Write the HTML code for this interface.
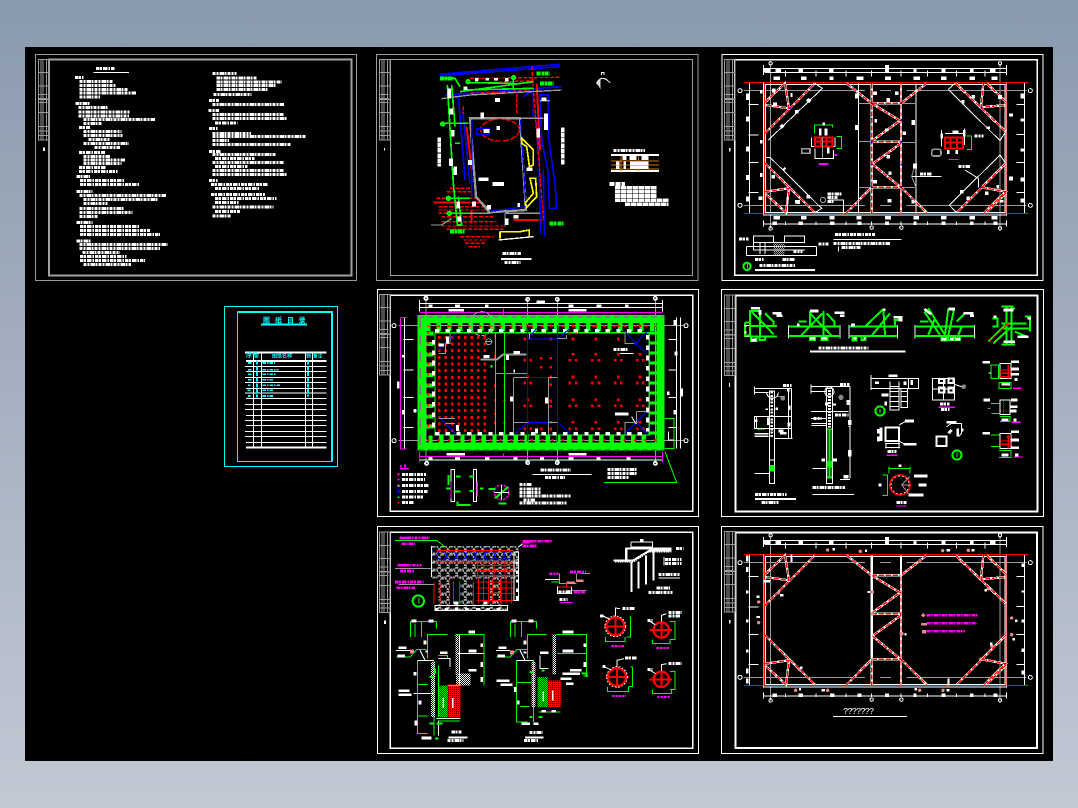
<!DOCTYPE html>
<html lang="zh"><head><meta charset="utf-8"><title>CAD</title>
<style>
html,body{margin:0;padding:0;width:1078px;height:808px;overflow:hidden;background:linear-gradient(#8a9aae,#c2c8d4)}
svg{position:absolute;left:0;top:0;display:block}
path,line,rect,circle,ellipse,polyline,polygon{fill:none}
.w{stroke:#fff;stroke-width:3}.w2{stroke:#fff;stroke-width:6}.f{fill:#fff;stroke:none}
.a{stroke:#9a9a9a;stroke-width:3}.a2{stroke:#a0a0a0;stroke-width:6}
.n{stroke:#0f0;stroke-width:3}.n2{stroke:#0f0;stroke-width:6}
.r{stroke:#f00;stroke-width:3}.r2{stroke:#f00;stroke-width:6}
.b{stroke:#00f;stroke-width:3}.b2{stroke:#00f;stroke-width:5}
.m{stroke:#f0f;stroke-width:3}.c{stroke:#0ff;stroke-width:3}
.y{stroke:#ff0;stroke-width:5}.o{stroke:#c87010;stroke-width:3}
.T{stroke:#fff;stroke-width:9;stroke-dasharray:10 2 6 3 14 2 5 3}
.Tm{stroke:#f0f;stroke-width:8;stroke-dasharray:10 2 6 3 14 2 5 3}
.Tn{stroke:#0f0;stroke-width:12;stroke-dasharray:12 2 8 2}
.Tc{stroke:#0ff;stroke-width:5;stroke-dasharray:10 3 5 3}
.d{stroke:#fff;stroke-width:11}
.s1{stroke:#fff;stroke-width:7}.s2{stroke:#f00;stroke-width:4;stroke-dasharray:16 5}
text{font-family:"Liberation Sans","Noto Sans CJK SC",sans-serif}
</style></head><body>
<svg width="1078" height="808" viewBox="0 0 1078 808" xmlns="http://www.w3.org/2000/svg" shape-rendering="crispEdges">
<defs>
<pattern id="ph" width="6" height="6" patternUnits="userSpaceOnUse"><path d="M0 0h3v3h-3zM3 3h3v3h-3z" style="fill:#0f0"/></pattern>
<pattern id="pr" width="6" height="6" patternUnits="userSpaceOnUse"><path d="M0 0h3v3h-3zM3 3h3v3h-3zM3 0h3v3h-3z" style="fill:#f00"/></pattern>
<pattern id="pw" width="6" height="6" patternUnits="userSpaceOnUse"><path d="M0 0h3v3h-3zM3 3h3v3h-3z" style="fill:#fff"/></pattern>
<pattern id="pa" width="6" height="6" patternUnits="userSpaceOnUse"><path d="M0 0h3v3h-3zM3 3h3v3h-3z" style="fill:#aaa"/></pattern>
<pattern id="pm" width="26" height="24" patternUnits="userSpaceOnUse"><rect x="2" y="2" width="22" height="20" rx="7" style="fill:none;stroke:#aaa;stroke-width:5;stroke-dasharray:6 2"/></pattern>
<g id="strip"><rect class="a" x="0" y="0" width="32" height="242"/><path class="a" d="M8 0V242M14 0V242M24 0V242M0 40H32M0 80H32M0 120H32M0 160H32M0 202H32M0 215H32M0 228H32M2 105H28M2 118H28M2 130H28"/></g>
<g id="struts">
<path id="sp" d="M150 157L210 100L222 175L150 165M150 250L300 100M150 340L300 488M150 425L222 415L213 488L150 430M722 100L872 245M805 100L798 172L872 165M815 100L872 155M872 340L725 488M800 412L872 425L807 488M872 430L815 488M470 100V490M558 100V490M470 160H558M470 275H558M470 412H558M470 160L555 212L472 272M558 280L472 342L555 410M395 100L470 160M558 160L635 100M395 488L470 412M558 412L635 488"/>
</g>
<g id="base">
<path class="a" d="M85 122H450M495 122H528M575 122H935M85 466H450M495 466H528M575 466H935M167 40V535M855 40V535"/>
<path class="w" d="M145 55H875M150 68H875M145 522H875M103 97V490M928 97V490M145 45V75M875 45V75M145 512V530M875 512V530"/>
<path class="w" d="M100 163H130M100 255H130M100 338H130M100 428H130M905 163H930M905 253H930M905 338H930M905 428H930M212 62V80M303 62V80M393 62V80M470 62V80M558 62V80M638 62V80M725 62V80M810 62V80M212 515V525M303 515V525M393 515V525M470 515V525M558 515V525M638 515V525M725 515V525M810 515V525"/>
<path class="r" d="M85 97H940M85 491H940"/>
<path class="w" d="M145 97V495H875V97H145ZM151 103H870V488H151Z"/>
<path class="r" d="M145 97H875M148 97V491M873 97V491M145 491H875"/>
<use href="#sp" class="s1"/><use href="#sp" class="s2"/>
<path class="d" d="M145 62H165M182 62H198M250 62H264M342 62H355M510 50H522M510 62H522M595 62H605M680 62H692M765 62H775M825 62H842M172 520H186M250 520H264M345 520H358M428 520H440M510 520H522M595 520H605M680 520H692M765 520H775M835 520H848"/>
<circle class="w" cx="167" cy="40" r="5"/><circle class="w" cx="855" cy="40" r="5"/><circle class="w" cx="167" cy="535" r="5"/><circle class="w" cx="855" cy="535" r="5"/><circle class="w" cx="470" cy="533" r="5"/><circle class="w" cx="559" cy="533" r="5"/>
<circle class="w" cx="75" cy="122" r="6"/><circle class="w" cx="75" cy="466" r="6"/><circle class="w" cx="946" cy="122" r="6"/><circle class="w" cx="946" cy="466" r="6"/>
</g>
</defs>
<rect x="25" y="47" width="1028" height="714" style="fill:#000"/>

<!-- Sheet 1 -->
<g transform="translate(25,45) scale(.33333)">
<rect class="a" x="31" y="28" width="964" height="678"/>
<rect class="a2" x="72" y="44" width="907" height="647"/>
<use href="#strip" transform="translate(40,43)"/>
<path class="f" d="M54 308h6v10h-6z"/>
<path class="T" d="M213 71H270M150 97H175M163 110H263M163 121H275M163 133H308M163 144H333M163 156H225M152 176H195M160 188H248M160 201H315M160 213H312M175 224H392M175 235H233M162 248H195M175 260H290M175 271H293M190 284H255M175 296H312M208 308H285M162 323H240M175 335H255M175 345H300M175 355H290M162 368H243M162 380H278M155 395H195M165 407H300M165 419H342M155 439H203M163 451H425M175 464H398M175 476H248M163 490H297M163 503H323M163 514H218M155 533H203M165 544H345M165 556H375M165 568H405M155 588H197M163 598H428M163 610H405M172 622H285M165 634H305M165 646H360M175 658H318"/>
<path class="T" d="M562 86H635M575 99H695M575 111H770M575 122H755M575 133H727M565 149H680M552 166H582M562 178H778M550 197H582M562 209H775M562 221H788M570 234H638M552 251H578M562 265H678M562 275H845M562 286H612M562 298H797M552 319H590M562 328H752M570 341H688M562 352H776M570 364H668M562 376H776M562 388H788M552 407H578M558 418H728M570 431H705M558 448H720M570 461H755M570 473H640M562 486H745M570 499H645M562 513H620"/>
<path class="w" d="M205 82H312"/>
</g>

<!-- Table -->
<g transform="translate(220,300) scale(.33333)">
<rect class="c" x="13" y="19" width="339" height="480"/>
<path class="c" style="stroke-width:6" d="M52 36H336V484"/><rect class="c" x="52" y="36" width="284" height="448"/>
<text x="129 165 201 236" y="68" style="fill:#0ff;font-size:21px;font-weight:bold">图纸目录</text>
<path class="c" style="stroke-width:6" d="M123 74H261"/>
<path class="w" d="M75 199H320M78 214H320M75 232H320M75 247H320M78 265H320M75 279H320M78 295H320M75 313H320M75 328H320M78 346H320M75 361H320M78 376H320M75 394H320M75 409H320M78 427H320M100 158V443M124 158V443M256 158V443M277 158V443"/>
<path class="w2" d="M75 158H320M78 183H320M78 443H320"/>
<text x="78 96" y="172" style="fill:#0ff;font-size:18px;font-weight:bold">序号</text>
<text x="104" y="172" style="fill:#0ff;font-size:14px;font-weight:bold">号</text>
<text x="156" y="172" style="fill:#0ff;font-size:15px;font-weight:bold">图纸名称</text>
<text x="258" y="172" style="fill:#0ff;font-size:16px;font-weight:bold">张</text>
<text x="279" y="172" style="fill:#0ff;font-size:14px;font-weight:bold">备注</text>
<path class="Tc" d="M84 189H94M128 189H165M84 209H94M128 209H175M84 223H94M128 223H168M84 239H94M128 239H162M84 256H92M128 256H180M82 271H92M128 271H160M84 288H92M128 288H162"/>
<path class="c" style="stroke-width:7;stroke-dasharray:12 5" d="M111 182V292M264 182V290"/>
</g>

<!-- Sheet 2 -->
<g transform="translate(370,50) scale(.33333)">
<rect class="a" x="19" y="14" width="965" height="677"/>
<rect class="a" x="62" y="28" width="906" height="648"/>
<use href="#strip" transform="translate(28,28)"/>
<path class="f" d="M42 294h3v8h-3z"/>
<!-- blue -->
<path class="b2" d="M207 73L570 43M210 77L570 50M225 135L575 110M510 135H535V260L555 400L560 475H538L535 370L515 270ZM505 240L512 550M520 360L523 560M265 135L285 390M278 180L300 400M490 115V200M495 180L505 300M460 140L490 120"/>
<path class="c" d="M345 205L445 205"/>
<!-- red -->
<path class="r2" style="stroke-dasharray:12 4;stroke-width:4" d="M300 85L572 82M290 100L490 92M300 130L480 122M485 50L520 505M440 130V190M190 458H340M200 445H320M230 425H310M240 415H300M205 470H345M205 480H345M205 490H360M215 500H370M215 515H380M215 528H400M230 538H400M270 560H370M280 570H350M285 580H345M295 590H330M430 510H520M280 170V190"/>
<path class="r2" d="M190 458H300M305 480V520M500 100L510 300M290 230L305 360M430 510H505"/>
<!-- green -->
<path class="n2" style="stroke-width:5" d="M232 105L250 400L262 525H275L265 440M245 105L255 230M215 220H295M270 125L490 95M280 120L490 115M210 85H255L270 110M300 98L435 100M430 85V120M230 445H300M240 490H300M255 280H270"/>
<path class="Tn" d="M500 70H540M210 85H250M510 100H550M538 520H580M240 545H283"/>
<circle class="n2" cx="294" cy="95" r="5"/><circle class="n2" cx="431" cy="83" r="5"/><circle class="n2" cx="218" cy="222" r="5"/><circle class="n2" cx="235" cy="445" r="5"/><circle class="n2" cx="238" cy="490" r="5"/>
<!-- gray bldg -->
<path class="a" style="stroke-width:7" d="M300 205L450 205L468 480L358 487L318 440Z"/>
<path class="a" style="stroke-width:4" d="M215 146L300 135M300 135L575 120M315 440L360 480M183 525H215L245 505M300 490H358M405 490H510M405 490V530M510 152H540M450 205H520"/>
<path class="b2" style="stroke-width:4" d="M305 210V440M452 210L468 470L360 484"/>
<ellipse class="r" cx="390" cy="240" rx="58" ry="33" style="stroke-dasharray:18 5;stroke-width:4"/>
<path class="b" style="stroke-width:5" d="M320 237H357V253H320Z"/>
<path class="y" d="M455 265L490 300V345L478 350L475 325L470 290L455 280ZM480 385H497L500 440L470 472L465 460L490 430ZM390 545H450L478 540V562M390 545V565"/>
<path class="w2" style="stroke-width:4" d="M385 570L490 560"/>
<!-- white blobs -->
<path class="d" d="M320 84V94M352 84V92M378 84V92M410 84V94M238 115V145M243 175V193M248 240V260M243 325V348M256 350V375M340 243H358M375 150H390M380 234H390M505 235V262M528 190V240M410 505V525M430 500H445M300 330V345M312 455V470M265 455V475M268 500V515M325 388H355M367 402H402M442 465H450M470 358H487M515 148H530M337 188V205M357 465V478M280 115H293"/>
<path class="w2" style="stroke-width:11;stroke-dasharray:14 2" d="M208 262V350M578 232V345"/>
<!-- north -->
<path class="w" d="M680 98Q696 72 720 98"/>
<path d="M678 100Q684 90 692 86V120Q688 108 678 100Z" style="fill:#ddd"/>
<path class="w" d="M695 75V68H702V75"/>
<!-- table -->
<path class="T" d="M730 301H825"/>
<path class="w2" d="M723 315H867M723 363H867"/>
<path class="o" d="M723 333H867M723 345H867M723 357H867M753 318V363M805 318V363"/>
<path class="d" d="M758 324H770M778 324H800M815 324H835M738 340H748M760 340H768M780 340H835M738 352H748M760 352H768M780 352H835"/>
<path class="T" style="stroke-width:11;stroke-dasharray:16 2" d="M718 402H765M735 413H860M735 425H860M735 438H860M735 451H895M765 463H895"/>
<path class="T" d="M398 610H455M403 637H452"/><path class="w2" d="M393 627H485"/>
</g>

<!-- Sheet 3 -->
<g transform="translate(715,50) scale(.33333)">
<rect class="w" x="21" y="14" width="963" height="677"/>
<rect class="w" style="stroke-width:5" x="59" y="29" width="908" height="647"/>
<use href="#strip" transform="translate(28,28)"/>
<path class="f" d="M42 294h4v10h-4z"/>
<use href="#base"/>
<path class="d" d="M175 85H195M258 85H275M343 85H355M425 85H445M510 85H528M595 85H615M678 85H695M763 85H780M830 85H848M175 503H195M258 503H275M343 503H358M425 503H440M510 503H528M595 503H612M678 503H695M763 503H780M830 503H848"/>
<path class="w" d="M300 100L322 115L160 270M150 322L165 322L320 475L300 488M700 118L720 100M700 118L855 272L872 245M703 465L855 315L872 340M703 465L725 488M430 100V490M603 100V490M218 490V430M385 450V490"/>
<path class="a" d="M430 160H470M430 275H470M430 412H470M558 160H600M558 278H600M558 412H600M590 380L600 345M590 380L603 412"/>
<path class="w" d="M590 380H680M750 360L790 385V412"/>
<path class="d" d="M98 130V150M98 200V215M98 290V305M98 375V390M98 440V455M135 125H142M135 275H142M135 375H142M130 445H142M888 190V200M888 380V392M922 130V145M922 205V215M922 295V305M922 382V395M922 445V458M176 115V128M226 135H232M276 148L286 155M180 158V170M245 180V190M197 225L205 232M205 355L210 360M175 375V385M245 450V460M280 435V445M250 450V462M426 225V240M426 130V145M480 125V135M545 125V135M515 150H525M478 212H486M515 235V245M515 320H525M480 390V400M518 452H530M590 455H598M600 340V355M595 210V225M568 245V255M520 370H530M740 155H748M820 230V237M775 135V145M855 135V147M810 430H820M845 410H852M735 425H745M760 440V450M860 450V458"/>
<path class="b2" d="M468 160h5M556 160h5M468 206h5M556 210h5M468 276h5M556 276h5M468 344h5M556 344h5M468 411h5M556 411h5M222 175h5M222 413h5M796 172h5M796 412h5"/>
<!-- details -->
<path class="n" d="M298 250V225H352V232M365 260H380V295H365"/>
<path class="w" d="M290 262V290H360V262M300 295V325H355V300"/>
<path class="d" style="stroke-width:8" d="M316 235V256M333 235V256M340 290V310M322 222H330"/>
<path class="r2" d="M300 262H352V290H300ZM300 275H352M318 260V290M334 260V290"/>
<path class="m" style="stroke-width:6" d="M310 342H340M358 315H366"/>
<rect class="a" style="stroke-width:5" x="260" y="296" width="25" height="14"/>
<path class="a" d="M322 262V325"/>
<path class="w" d="M680 240V290M748 235V285M690 250H745"/>
<path class="d" style="stroke-width:8" d="M680 250V265M748 240V260M700 300V312M725 300V312M712 246H730"/>
<path class="r2" d="M690 262H744V296H690ZM690 278H744M706 262V296M726 262V296"/>
<path class="n" d="M755 258H770V298H755"/><path class="m" d="M700 328H730"/>
<rect class="a" style="stroke-width:5" x="650" y="298" width="28" height="20" rx="6"/>
<circle class="a" cx="324" cy="450" r="8"/>
<path class="T" d="M338 432H380M338 443H368M338 455H358M730 350H765M778 258H805M615 372H650"/>
<path class="w" d="M340 450H385V490"/>
<!-- bottom detail -->
<path class="T" d="M360 553H480M355 580H525M380 592H438"/><path class="w" d="M355 568H560M370 590V605"/>
<path class="w" d="M115 578V558H175V578M208 578V558H268V578M115 578H270M95 590H305M95 617H305V590M95 590V617M115 578V600H270M135 578V612M150 578V612"/>
<rect x="175" y="580" width="33" height="35" style="fill:url(#pa)"/>
<path class="T" d="M72 567H100M235 605H262M120 629H145M203 629H238M310 582H340"/>
<circle class="n2" cx="96" cy="649" r="11"/><path class="n" d="M97 642V656"/>
<path class="T" d="M133 646H240"/><path class="w2" d="M120 660H300"/>
</g>

<!-- Sheet 4 -->
<g transform="translate(370,285) scale(.33333)">
<rect class="w" x="23" y="14" width="962" height="680"/>
<rect class="w" style="stroke-width:5" x="61" y="31" width="907" height="648"/>
<use href="#strip" transform="translate(28,28)"/>
<path class="a" d="M85 122H945M85 467H945M168 40V535M473 40V535M562 40V535M856 40V535"/>
<path class="w" d="M148 55H878M148 68H878M148 45V80M878 45V80M148 525H878M148 512V530M878 512V530M103 97V490M920 97V490M932 97V490M100 163H130M100 255H130M100 338H130M100 428H130M895 163H920M895 255H920M895 338H920M895 428H920"/>
<path class="m" d="M148 83H878M92 97V492M148 515H878M148 500V528M878 500V528M92 97H110M92 492H110M400 70V95M400 505V515"/>
<path class="d" style="stroke-width:8" d="M175 62H188M255 62H270M345 62H355M500 50H525M595 62H610M680 62H695M765 62H775M235 76H282M595 76H650M230 508H285M595 508H650M175 520H188M255 520H270M345 520H358M430 520H442M510 520H522M595 520H610M680 520H692M770 520H782M100 210V218M100 375V388M85 290V310M135 372V382M915 105V122M918 200V212M915 375V388M935 310V335M895 320V330"/>
<circle class="w" style="stroke-width:5" cx="168" cy="40" r="5"/><circle class="w" style="stroke-width:5" cx="473" cy="43" r="5"/><circle class="w" style="stroke-width:5" cx="562" cy="43" r="5"/><circle class="w" style="stroke-width:5" cx="856" cy="40" r="5"/><circle class="w" style="stroke-width:5" cx="170" cy="535" r="5"/><circle class="w" style="stroke-width:5" cx="473" cy="533" r="5"/><circle class="w" style="stroke-width:5" cx="562" cy="533" r="5"/><circle class="w" style="stroke-width:5" cx="856" cy="535" r="5"/>
<circle class="w" cx="72" cy="122" r="6"/><circle class="w" cx="72" cy="467" r="6"/><circle class="w" cx="948" cy="122" r="6"/><circle class="w" cx="948" cy="467" r="6"/>
<!-- green band -->
<rect x="155" y="102" width="717" height="382" style="stroke:#0f0;stroke-width:24"/>
<path style="stroke:#0f0;stroke-width:24;stroke-dasharray:13 19" d="M168 126H860"/>
<path style="stroke:#0f0;stroke-width:22;stroke-dasharray:13 19" d="M175 462H832"/>
<path style="stroke:#0f0;stroke-width:24;stroke-dasharray:12 19" d="M178 140V450"/>
<path style="stroke:#0f0;stroke-width:4" d="M195 143H838V450H195Z"/>
<path style="stroke:#0f0;stroke-width:24;stroke-dasharray:8 22" d="M850 140V450"/>
<path style="stroke:#f0f;stroke-width:3;stroke-dasharray:16 12" d="M145 96H880M145 493H880"/>
<path class="m" style="stroke-width:4;stroke-dasharray:30 20" d="M150 100V490"/>
<path class="d" style="stroke-width:10;stroke-dasharray:13 19" d="M195 137H835M195 446H825"/>
<path style="stroke:#fff;stroke-width:9;stroke-dasharray:14 17" d="M190 165V440M832 150V440"/>
<path style="stroke:#f00;stroke-width:5;stroke-dasharray:7 24" d="M172 124H860M172 465H860M175 140V450"/>
<!-- red dots -->
<path style="stroke:#f00;stroke-width:9;stroke-dasharray:8 11.4" d="M204 157H352M204 177H352M204 197H352M204 217H352M204 237H352M204 257H352M204 277H352M204 297H352M204 317H352M204 337H352M204 357H352M204 377H352M204 397H352M204 417H352M204 437H352"/>
<path style="fill:#f00;stroke:none" d="M460 222h8v8h-8zM478 222h8v8h-8zM510 216h8v8h-8zM538 216h8v8h-8zM510 243h8v8h-8zM538 243h8v8h-8zM595 222h8v8h-8zM615 222h8v8h-8zM605 204h8v8h-8zM663 222h8v8h-8zM683 222h8v8h-8zM673 204h8v8h-8zM732 222h8v8h-8zM750 222h8v8h-8zM741 204h8v8h-8zM798 222h8v8h-8zM816 222h8v8h-8zM806 204h8v8h-8zM460 290h8v8h-8zM478 290h8v8h-8zM469 272h8v8h-8zM538 295h8v8h-8zM538 272h8v8h-8zM595 290h8v8h-8zM615 290h8v8h-8zM605 272h8v8h-8zM663 290h8v8h-8zM683 290h8v8h-8zM673 272h8v8h-8zM732 290h8v8h-8zM750 290h8v8h-8zM741 272h8v8h-8zM798 290h8v8h-8zM816 290h8v8h-8zM806 272h8v8h-8zM460 358h8v8h-8zM478 358h8v8h-8zM469 340h8v8h-8zM538 344h8v8h-8zM538 360h8v8h-8zM595 358h8v8h-8zM615 358h8v8h-8zM605 340h8v8h-8zM663 358h8v8h-8zM683 358h8v8h-8zM673 340h8v8h-8zM732 358h8v8h-8zM750 358h8v8h-8zM741 340h8v8h-8zM798 358h8v8h-8zM816 358h8v8h-8zM806 340h8v8h-8zM460 427h8v8h-8zM478 427h8v8h-8zM469 408h8v8h-8zM510 428h8v8h-8zM538 428h8v8h-8zM538 408h8v8h-8zM595 427h8v8h-8zM615 427h8v8h-8zM605 408h8v8h-8zM663 427h8v8h-8zM683 427h8v8h-8zM673 408h8v8h-8zM732 427h8v8h-8zM750 427h8v8h-8zM741 408h8v8h-8zM798 427h8v8h-8zM816 427h8v8h-8zM806 408h8v8h-8zM460 158h8v8h-8zM538 158h8v8h-8zM605 158h8v8h-8zM673 158h8v8h-8zM741 158h8v8h-8zM595 143h8v6h-8zM615 143h8v6h-8zM673 118h8v8h-8zM741 118h8v8h-8zM806 118h8v8h-8zM605 118h8v8h-8zM538 118h8v8h-8zM469 118h8v8h-8zM372 150h6v8h-6zM372 210h6v8h-6zM372 298h6v8h-6zM372 342h6v8h-6zM372 382h6v8h-6zM372 410h6v8h-6zM400 245h6v8h-6zM400 298h6v8h-6zM400 344h6v8h-6zM400 410h6v8h-6z"/>
<!-- green inner -->
<path class="n" d="M376 143V450M403 143V450"/><path class="n" d="M376 265H473"/>
<!-- blue -->
<path class="b" d="M473 120V470M562 120V470M473 162H562M473 277H562M473 412H562M473 162L500 130M562 162L600 130M473 412L435 445M562 412L600 445M798 175L765 140M798 175L830 140M798 175L830 205M798 413L765 445M798 413L830 380M798 413L830 445M226 175L205 195M226 175L260 145M226 415L205 395M226 415L255 445"/>
<!-- gray -->
<path class="a" d="M478 145V162M430 277H473M430 277V445M430 412H473M535 277V450M535 277H562M535 412H562M562 160H590V150M798 175H765V140M798 413H765V450M800 380H835M800 380V413M226 175H240V145M226 415H255M205 205H226V175M205 400H255"/>
<ellipse class="a" cx="335" cy="116" rx="35" ry="36" style="stroke-dasharray:16 4"/>
<circle class="a" cx="356" cy="170" r="9"/><path class="a" d="M345 170H367"/>
<path class="a2" d="M332 224H380L400 208H470"/>
<path class="d" style="stroke-width:9" d="M340 215H358M430 202H450M412 210V225M233 155V175M205 180H222M430 258H435M425 335V350M530 338V355M735 387H775M830 378H835M262 420V438M500 430V445"/>
<path class="T" d="M730 193H775"/>
<path class="w" d="M750 205H790M785 395L795 412"/>
<path class="n" d="M885 500L920 592H702M885 400H912V490H885"/><path class="w" d="M895 440V465H910"/>
<circle class="b2" cx="798" cy="175" r="3"/><circle cx="798" cy="413" r="4" style="fill:#aaa"/>
<path class="n2" d="M365 240V248"/>
<!-- legend -->
<path class="T" d="M96 568H168M96 584H165M96 602H176M96 620H172M96 636H160M96 653H130"/>
<path class="m" style="stroke-width:5" d="M92 540V548M105 538V548M90 551H117"/>
<path d="M82 564h7v8h-7zM82 581h7v6h-7z" style="fill:#f0f"/><path d="M82 598h7v8h-7z" style="fill:#aaa"/><rect class="b" x="83" y="617" width="5" height="5"/><path d="M82 634h6v5h-6z" style="fill:#0f0"/><path d="M82 650h7v6h-7z" style="fill:#f00"/>
<!-- col detail -->
<path class="w" d="M243 553V650H253V553ZM310 553V650H320V553Z"/>
<path class="m" style="stroke-width:4" d="M243 590V640M322 590V635"/>
<path class="n2" d="M235 570V600M258 575H272M228 610H242M250 620H272M298 575H312M330 610H340M298 618H312M260 660H302M262 650V662"/>
<circle class="m" style="stroke-dasharray:8 3;stroke-width:4" cx="395" cy="622" r="22"/>
<path class="n2" d="M375 640L415 605M356 612H375M385 655H410"/>
<path class="w" d="M395 600V644M373 622H417"/>
<path class="T" d="M512 555H603M525 577H585M448 598H486M448 612H515M448 622H515M448 633H603M460 645H495M448 654H590M712 553H800M712 565H800M712 577H775"/>
<path class="w" d="M487 568H665"/>
</g>

<!-- Sheet 5 -->
<g transform="translate(715,285) scale(.33333)">
<rect class="w" x="19" y="14" width="966" height="680"/>
<rect class="w" style="stroke-width:6" x="61" y="31" width="907" height="648"/>
<use href="#strip" transform="translate(28,30)"/>
<path class="f" d="M42 294h3v12h-3z"/>
<!-- nodes -->
<path class="w" d="M88 122H186M88 155H186M105 75V155M135 75V155M220 125H375M220 155H375M220 120V160M375 120V160M402 125H548M402 155H548M600 125H778M600 155H778M600 120V160M778 120V160M402 120V160M548 120V160"/>
<path class="n2" d="M105 78V155H186M135 78V155M105 78H135M105 123H186M108 78L176 148M90 112H105M90 112V152H105M108 155V168H125V155M133 155V165H150V155M150 85L178 112M175 112V122"/>
<path class="n2" d="M220 125H375M220 153H375M258 152L322 85M285 85L350 152M325 78V152M285 78V125M250 110H275M335 85L358 110V125M285 155V165H300V155M320 155V165H337V155"/>
<path class="n2" d="M402 125H548M402 153H548M450 125L505 72M470 152L525 85M505 72L510 150M405 125H420M535 105H560M540 105V125M412 155V167H425V155M440 155V165H452V155"/>
<path class="n2" d="M600 125H778M600 153H778M640 70L690 150M628 80L675 150M700 70L690 150M718 70L700 150M725 110L750 85M650 125L660 100M615 110H640M680 155V167H695V155M700 155V165H715V155M720 155V165H735V155M640 150L650 125M740 125L730 150"/>
<path class="n2" d="M875 65V180M890 65V180M820 170L875 115M835 175L890 125M860 65H895M860 178H900M860 115H935M860 130H945M832 100H848V125H832M880 75L900 70M900 140L935 155M930 95H945V140"/>
<path class="r2" style="stroke-width:3;stroke-dasharray:8 4" d="M878 70V175M825 168L875 120"/><path class="r2" d="M870 118H882"/>
<path class="d" style="stroke-width:8" d="M108 70H135M92 120V125M135 75V90M172 85H200M185 92H203M88 142H95M108 165H124M285 160H300M320 160H336M285 78H310M358 83H388M375 92H388M250 115V125M415 160H425M445 160H452M508 70V78M535 97H562M550 105H562M408 120H420M745 85H775M765 92H777M680 162H695M705 162H715M720 162H735M628 72L648 88M700 72H720M938 100H948M908 155H940M835 95H845M865 170H900M865 75H895"/>
<path class="T" d="M310 189H460"/><path class="w2" d="M285 200H572"/>
<!-- col 1 -->
<path class="w" d="M163 318V595H178V318ZM118 310H230M118 322H160M118 305V328M118 395H230V430H118ZM230 310V460M220 315V460M163 525H178M118 450H160M118 565H163M118 455H160M118 445H160M180 460H232M125 430V395"/>
<path class="w" style="stroke-width:3" d="M155 322A16 16 0 1 0 190 322"/>
<path d="M163 540h15v20h-15z" style="fill:#0f0"/>
<path class="d" style="stroke-width:7;stroke-dasharray:6 4" d="M170 320V460"/>
<path class="T" d="M204 302H230M120 628H215M140 652H190"/>
<circle cx="203" cy="340" r="7" style="fill:#888"/><path class="a" d="M185 335H210"/>
<path class="d" style="stroke-width:8" d="M220 312V320M155 370V375M185 367V375M223 362V375M120 407H128M222 412V425M190 438H205M195 445H215M160 398V420"/><path class="n" style="stroke-dasharray:5 3" d="M128 433H150"/>
<path class="w2" d="M120 642H243"/>
<!-- col 2 -->
<path class="w" d="M335 310V595H352V310ZM288 305H405M288 320H335M288 298V325M288 380H400M288 400H335M405 305V580M290 415H335M290 422H335M400 425H405M293 550H335M375 583H405"/>
<path d="M336 430h15v150h-15z" style="fill:#0f0"/><rect x="338" y="434" width="3" height="140" style="fill:#000"/><rect x="346" y="434" width="3" height="140" style="fill:#000"/>
<path d="M335 528h17v20h-17z" style="fill:#0f0"/>
<path class="d" style="stroke-width:9;stroke-dasharray:6 3" d="M343 315V428"/>
<circle class="w" cx="343" cy="320" r="14"/><circle cx="378" cy="337" r="8" style="fill:#888"/>
<path class="T" d="M375 298H403M293 608H390M295 400H320M360 390H400"/>
<path class="w" d="M293 628H417"/>
<path class="d" d="M400 345V360M404 405V420M404 495V515M335 352V362M358 355V362M325 520V530M360 520V530M385 575H400"/>
<!-- J -->
<path class="w" d="M468 280H610V310H468ZM468 270V315M610 280V310M525 290V375H552V290M580 280V310M558 310V368H578V310"/>
<path class="w" d="M525 305H552M525 320H552M525 335H552M525 350H552M525 365H552M558 320H578M558 335H578M558 350H578"/>
<path class="d" style="stroke-width:8" d="M520 272H548M480 293H492M570 290V300M590 285V300M500 330H520M512 350V362"/>
<circle class="n2" cx="495" cy="378" r="14"/><path class="n" d="M495 372V385"/>
<path class="w" d="M652 280V345H718V280ZM652 312H718M685 280V345"/>
<rect class="w2" x="672" y="282" width="16" height="12"/><rect class="w2" x="700" y="280" width="16" height="14"/><rect class="w2" x="672" y="308" width="16" height="14"/><rect class="w2" x="700" y="308" width="16" height="14"/>
<circle cx="746" cy="305" r="7" style="fill:#888"/><path class="w" d="M718 298L740 305"/>
<path class="T" d="M675 357H703M678 373H703"/><path class="m" style="stroke-width:4" d="M670 367H720"/>
<!-- sections -->
<rect class="w2" x="512" y="428" width="40" height="40"/>
<path class="w" d="M510 475H555M510 488H555M513 475V490M552 468V490M552 420L570 410M555 470L570 478"/>
<path class="d" style="stroke-width:8" d="M498 428V468M490 432V445M490 455V470M570 408H597M565 478H605"/>
<path class="T" d="M518 500H545"/><path class="m" style="stroke-width:4" d="M515 511H548"/>
<rect class="w2" x="665" y="455" width="30" height="28"/>
<path class="w" d="M695 425L710 415H740V445L730 455"/>
<path class="d" style="stroke-width:8" d="M695 412H725M728 430V455M742 430V440M700 445L710 435"/>
<circle class="n2" cx="726" cy="510" r="14"/><path class="n" d="M726 503V516"/>
<circle cx="555" cy="600" r="30" style="stroke:#f00;stroke-width:5"/>
<circle cx="555" cy="600" r="27" style="stroke:#fff;stroke-width:2;stroke-dasharray:6 6"/>
<path class="a" d="M560 600L585 575M560 600L585 600M560 600L580 625"/>
<path class="n" d="M502 570H518V632H502M522 550H585M522 545V565M585 545V565"/>
<path class="d" style="stroke-width:8" d="M495 595V605M550 542H560M597 573H638M610 600H635M580 630H625"/>
<path class="T" d="M545 653H575"/><path class="m" style="stroke-width:4" d="M545 663H575"/>
<!-- right -->
<path class="n" d="M828 240H850V280H828ZM852 292H888V310H852V292M828 355H855V385H830M855 395H885V410H855M828 450H855V485H828M852 497H888V518H852"/>
<path class="w" d="M855 235H888V280H855ZM855 345H885V388H855ZM855 445H888V490H855Z"/>
<path class="r2" style="stroke-width:4" d="M855 255H888M855 265H888M855 275H888M880 238V280M875 455H888M855 468H888M855 478H888M880 448V490"/>
<path class="r" style="stroke-dasharray:3 3" d="M856 378H882M866 348V388"/>
<path class="d" style="stroke-width:8" d="M802 232H825M888 230H912M888 252H912M888 268H912M860 298H885M805 345H825M888 345H908M885 365H908M885 378H905M860 404H880M802 445H825M888 440H912M888 465H912M888 488H912M860 510H880M825 262V265M822 370V372"/>
<path class="m" style="stroke-width:4" d="M893 310H920M890 412H918M895 516H924"/>
<path class="T" d="M898 284H908M895 405H905M900 510H910"/>
</g>

<!-- Sheet 6 -->
<g transform="translate(370,522) scale(.33333)">
<rect class="w" x="23" y="14" width="962" height="680"/>
<rect class="w" style="stroke-width:4" x="61" y="31" width="907" height="648"/>
<use href="#strip" transform="translate(28,30)"/>
<path class="f" d="M42 296h6v10h-6z"/>
<!-- top hatch -->
<rect x="185" y="72" width="260" height="98" style="fill:url(#pm)"/>
<rect x="205" y="170" width="35" height="90" style="fill:url(#pm)"/><rect x="272" y="170" width="35" height="90" style="fill:url(#pm)"/><rect x="360" y="170" width="35" height="90" style="fill:url(#pm)"/>
<rect x="195" y="248" width="218" height="18" style="fill:url(#pm)"/>
<path class="w" d="M185 72V165M195 250H413V265H195ZM432 90V235H445V90Z"/>
<path class="a" d="M75 140H185M85 188H195"/>
<circle class="b" cx="215" cy="100" r="14"/><circle class="b" cx="244" cy="100" r="14"/><circle class="b" cx="273" cy="100" r="14"/><circle class="b" cx="302" cy="100" r="14"/><circle class="b" cx="331" cy="100" r="14"/><circle class="b" cx="360" cy="100" r="14"/><circle class="b" cx="389" cy="100" r="14"/><circle class="b" cx="412" cy="100" r="12"/>
<path class="r" d="M200 85H430M200 120H430M320 130H430M320 145H430M320 160H430M320 180H430M320 198H430M320 215H430M320 235H430M325 170V245M340 170V245M355 170V245M368 170V245M392 170V245M408 170V245M425 170V245M192 180V245M210 178V245M250 178V245M268 178V245M310 178V245M322 120V170M340 120V170M372 120V170M405 120V170"/>
<path class="d" style="stroke-width:8" d="M250 243H265M340 243H352M195 262H205M225 262H235M255 262H265M285 262H295M318 262H330M350 262H360M380 262H392M442 118V126M442 145V155M442 173V182M442 200V210M442 222V235"/>
<path class="n" d="M75 55H200L225 75"/>
<path class="Tm" d="M88 48H180M95 65H135M82 130H155M90 147H135M75 180H160M80 197H135M458 58H545M458 72H500"/>
<path style="stroke:#f0f;stroke-width:8" d="M88 49H115M82 130H105M458 60H478"/>
<path class="w" d="M445 75L458 65"/>
<circle class="n2" cx="145" cy="237" r="17"/><path class="n" d="M147 228V245"/>
<!-- mid small -->
<path class="a" d="M568 155V185H620M635 155H660M620 155V180M590 205H650"/>
<path class="w" d="M562 195H605V215H562ZM525 172H568"/>
<path d="M590 178h25v8h-25zM620 172h20v8h-20z" style="fill:#e88"/><path class="r" d="M565 195H605M590 180V195"/>
<path class="n" d="M545 180H570"/>
<path class="Tm" d="M538 155H565M600 150H648M612 210H645"/>
<path class="T" d="M568 232H592M565 210H605"/><path class="m" d="M568 241H608"/>
<!-- stairs -->
<path class="w2" d="M770 120V80H905M730 115H790L840 85H905"/>
<path class="d" style="stroke-width:7;stroke-dasharray:5 2" d="M735 118H790L835 88H905"/>
<path class="w" d="M783 60V75H848V60H783"/>
<path class="w2" d="M785 120V210M805 118V200M828 100V188M850 88V175M768 78V112"/>
<path class="T" d="M810 55H822M918 80H940M885 112H935M885 125H935M865 157H930M835 212H908"/><path class="w" d="M882 130V105M865 168H930"/>
<path class="T" d="M860 198H900"/>
<!-- circles -->
<circle cx="736" cy="313" r="27" style="stroke:#f00;stroke-width:7"/><path class="r2" d="M702 313H770M736 282V344"/><path class="w" d="M736 282V258L750 260M720 292L700 282"/>
<circle cx="736" cy="313" r="31" style="stroke:#fff;stroke-width:3;stroke-dasharray:5 5"/>
<path class="n" d="M778 285H782V345H770M706 345V358H765V345"/><path class="T" d="M757 260H795M690 282H700"/>
<path class="m" style="stroke-width:5;stroke-dasharray:7 3" d="M725 372H762"/>
<circle cx="874" cy="324" r="23" style="stroke:#f00;stroke-width:7"/><path class="r2" d="M838 324H906M874 298V350"/><path class="w" d="M874 298V280L890 275M855 308L840 298"/>
<path class="n" d="M900 298H915V352H900M848 352V365H900V352"/><path class="T" d="M895 272H935M832 295H848M895 282H930"/>
<path class="m" style="stroke-width:5;stroke-dasharray:7 3" d="M860 378H898"/>
<circle cx="741" cy="465" r="27" style="stroke:#f00;stroke-width:7"/><path class="r2" d="M707 465H775M741 434V496"/><path class="w" d="M741 434V415L762 410M725 445L705 435"/>
<circle cx="741" cy="465" r="31" style="stroke:#fff;stroke-width:3;stroke-dasharray:5 5"/>
<path class="n" d="M782 435H787V493H775M712 495V508H775V495"/><path class="T" d="M765 408H803M697 433H710"/>
<path class="m" style="stroke-width:5;stroke-dasharray:7 3" d="M726 522H768"/>
<circle cx="874" cy="472" r="23" style="stroke:#f00;stroke-width:7"/><path class="r2" d="M838 472H906M874 447V497"/><path class="w" d="M874 447V428L890 425M857 455L840 445"/>
<path class="n" d="M900 448H915V502H900M848 503V515H905V503"/><path class="T" d="M895 425H935M832 442H848"/>
<path class="m" style="stroke-width:5;stroke-dasharray:7 3" d="M862 525H900"/>
<!-- section 1-1 -->
<path class="n" d="M122 345V298H200V320M135 305V345M155 298V345M172 410V338H232M258 338H342V490M262 395H340M80 405H120L140 383L170 383M142 415V635H172M142 487H172M142 582H172M192 415V640M205 400H232V410M205 430V490"/>
<path class="w" d="M150 385L165 415M142 415H190M268 338V490M262 395H340M200 590H272M205 595V640M205 410H240V435M78 385H120"/>
<rect x="256" y="338" width="10" height="120" style="fill:url(#pw)"/>
<rect x="258" y="455" width="44" height="35" style="fill:url(#pw)"/>
<rect x="183" y="420" width="12" height="165" style="fill:url(#pw)"/>
<path d="M120 383h12v12h-12z" style="fill:#e88"/>
<path class="d" style="stroke-width:8" d="M125 297H140M175 297H190M295 330H315M295 387H320M295 445H320M335 365V375M335 420V435M335 465V480M165 355V368M135 450V460M150 535V548M138 595V610M170 385V392M210 392H232M85 377H110M82 402H105M85 506H118M85 518H125M155 648H185"/>
<path class="n2" d="M178 465H190M178 605H190M200 605H218M195 650H205M195 440V455"/>
<rect x="205" y="490" width="27" height="95" style="fill:url(#ph)"/>
<rect x="232" y="488" width="40" height="97" style="fill:url(#pr)"/>
<path class="f" d="M218 528h4v30h-4zM246 528h4v30h-4z"/>
<path class="n" d="M205 490V585M232 490H272"/>
<path class="w" d="M130 515H190"/>
<path class="n" d="M205 597H270"/>
<path class="T" d="M245 630H275M232 655H280"/><path class="w2" d="M235 647H293"/>
<path class="n" d="M422 345V298H500V320M435 305V345M455 298V345M472 410V338H530M558 338H650V465M562 395H650M380 405H420L440 383L472 383M440 415V600H472M440 482H485M450 553H478M490 415V600"/>
<path class="w" d="M450 385L465 415M440 415H490M378 385H420M510 400V440H535"/>
<rect x="548" y="338" width="10" height="120" style="fill:url(#pw)"/>
<rect x="484" y="420" width="12" height="135" style="fill:url(#pw)"/>
<path d="M420 385h12v12h-12z" style="fill:#e88"/>
<path class="d" style="stroke-width:8" d="M425 297H440M475 297H490M578 330H610M578 387H610M600 445H635M578 455H630M572 470H605M588 485H610M645 365V375M645 420V435M465 355V368M436 495V510M445 535V548M465 388V395M510 392H535M385 377H410M382 402H405M380 476H418M392 488H428M455 605H480"/>
<rect x="503" y="465" width="30" height="90" style="fill:url(#ph)"/>
<rect x="533" y="475" width="40" height="80" style="fill:url(#pr)"/>
<path class="f" d="M518 508h4v30h-4zM546 505h4v30h-4z"/>
<path class="n2" d="M478 450H490M515 445H523M478 585H488M505 585H518M635 455H650V465"/>
<path class="n" d="M505 570H572M640 462H655"/>
<path class="d" style="stroke-width:8" d="M515 568H528M545 568H558M490 605H505"/>
<path class="T" d="M478 632H518M462 655H505"/><path class="w2" d="M465 647H520"/>
</g>

<!-- Sheet 7 -->
<g transform="translate(715,522) scale(.33333)">
<rect class="w" x="19" y="14" width="965" height="680"/>
<rect class="w" style="stroke-width:6" x="61" y="31" width="905" height="647"/>
<use href="#strip" transform="translate(28,28)"/>
<path class="f" d="M42 294h4v10h-4z"/>
<use href="#base"/>
<path class="a" d="M145 100V490"/>
<path class="w2" d="M470 100V412M558 100V160"/>
<path class="w2" d="M230 97V120M700 470V490"/>
<path class="d" style="stroke-width:8" d="M97 100V118M97 135V150M97 205V215M97 292V302M97 382V392M97 440V455M97 470V485M145 178H165M924 125V135M924 205V212M924 292V302M924 380V390M924 445V458"/>
<circle style="fill:#e88" cx="338" cy="84" r="5"/><circle style="fill:#e88" cx="436" cy="88" r="5"/><circle style="fill:#e88" cx="683" cy="86" r="5"/><circle style="fill:#e88" cx="760" cy="85" r="5"/><circle style="fill:#e88" cx="131" cy="240" r="5"/><circle style="fill:#e88" cx="131" cy="302" r="5"/><circle style="fill:#e88" cx="890" cy="288" r="5"/><circle style="fill:#e88" cx="890" cy="338" r="5"/><circle style="fill:#e88" cx="190" cy="212" r="5"/><circle style="fill:#e88" cx="254" cy="442" r="5"/><circle style="fill:#e88" cx="830" cy="372" r="5"/><circle style="fill:#e88" cx="820" cy="200" r="5"/><circle style="fill:#e88" cx="242" cy="505" r="5"/><circle style="fill:#e88" cx="338" cy="505" r="5"/><circle style="fill:#e88" cx="614" cy="505" r="5"/><circle style="fill:#e88" cx="684" cy="505" r="5"/><circle style="fill:#e88" cx="472" cy="210" r="5"/><circle style="fill:#e88" cx="472" cy="276" r="5"/><circle style="fill:#e88" cx="560" cy="335" r="6"/><circle style="fill:#e88" cx="797" cy="412" r="5"/><circle style="fill:#e88" cx="472" cy="412" r="4"/>
<path class="d" style="stroke-width:7" d="M352 82H360M450 86H456M695 85H705M770 85H778M195 220H205M255 437H262M125 224H133M125 285H135M900 296H908M892 352H900M808 205H816M825 365H832M252 502H258M320 505H330M598 502H606M695 505H703M458 210H465M568 337H575"/>
<path class="Tm" d="M635 280H790M635 304H785M635 328H750"/>
<path d="M618 280l7-7 7 7-7 7zM618 303h18v8h-18zM621 324h12v10h-12z" style="fill:#e88"/>
<text x="384 397 410 423 436 449 462" y="576" style="fill:#fff;font-size:27px;font-family:'Liberation Mono',monospace">???????</text>
<path class="w" d="M354 583H576"/>
</g>
</svg>
</body></html>
